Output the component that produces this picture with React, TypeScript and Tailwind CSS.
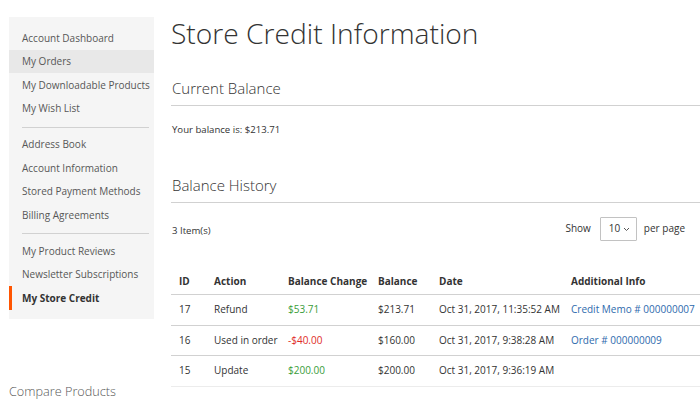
import React from "react";

const font = { fontFamily: '"Open Sans", "Liberation Sans", sans-serif' };

function NavItem({ label, active, current }: { label: string; active?: boolean; current?: boolean }) {
  return (
    <div
      className={
        "h-[23.5px] flex items-center text-[10px] pt-px " +
        (current
          ? "border-l-[3px] border-[#ff5501] pl-[10px] font-bold text-[#333]"
          : "pl-[13px] text-[#575757] " + (active ? "bg-[#e8e8e8]" : ""))
      }
    >
      <span className="whitespace-nowrap">{label}</span>
    </div>
  );
}

function Sep() {
  return (
    <div className="pt-[6.5px] pb-[5px] pl-[13px] pr-[5px]">
      <div className="h-px bg-[#d1d1d1]" />
    </div>
  );
}

const rows = [
  { id: "17", action: "Refund", change: "$53.71", neg: false, balance: "$213.71", date: "Oct 31, 2017, 11:35:52 AM", info: "Credit Memo # 000000007" },
  { id: "16", action: "Used in order", change: "-$40.00", neg: true, balance: "$160.00", date: "Oct 31, 2017, 9:38:28 AM", info: "Order # 000000009" },
  { id: "15", action: "Update", change: "$200.00", neg: false, balance: "$200.00", date: "Oct 31, 2017, 9:36:19 AM", info: "" },
];

export default function App() {
  return (
    <div style={font} className="w-[700px] h-[402px] overflow-hidden bg-white flex text-[#333]">
      {/* Sidebar */}
      <div className="ml-[9px] w-[145px] shrink-0 flex flex-col">
        <div className="mt-[17px] bg-[#f5f5f5] pt-[9px] pb-[9.5px]">
          <NavItem label="Account Dashboard" />
          <NavItem label="My Orders" active />
          <NavItem label="My Downloadable Products" />
          <NavItem label="My Wish List" />
          <Sep />
          <NavItem label="Address Book" />
          <NavItem label="Account Information" />
          <NavItem label="Stored Payment Methods" />
          <NavItem label="Billing Agreements" />
          <Sep />
          <NavItem label="My Product Reviews" />
          <NavItem label="Newsletter Subscriptions" />
          <NavItem label="My Store Credit" current />
        </div>
        <div className="mt-[64px] text-[12.7px] leading-[17px] font-light text-[#575757] whitespace-nowrap">
          Compare Products
        </div>
      </div>

      {/* Main */}
      <div className="ml-[17px] flex-1 min-w-0 flex flex-col">
        <div className="h-[66px] flex items-center">
          <h1 className="text-[28.2px] leading-none font-light text-[#333] whitespace-nowrap">Store Credit Information</h1>
        </div>

        <div className="h-[40px] flex items-end pb-[6px] border-b border-[#d1d1d1]">
          <h2 className="text-[15px] leading-[22px] font-light text-[#333] pl-px">Current Balance</h2>
        </div>
        <div className="mt-[17px] text-[9.6px] leading-[13px] pl-px">Your balance is: $213.71</div>

        <div className="h-[66.5px] flex items-end pb-[6px] border-b border-[#d1d1d1]">
          <h2 className="text-[15px] leading-[22px] font-light text-[#333] pl-px">Balance History</h2>
        </div>

        <div className="h-[52px] flex items-center justify-between pr-[15px]">
          <div className="text-[9.6px] mt-[5px] pl-px">3 Item(s)</div>
          <div className="flex items-center text-[10px] text-[#333]">
            <span>Show</span>
            <div className="ml-[9px] w-[37px] h-[24px] border border-[#c2c2c2] rounded-[1px] flex items-center pl-[8px] gap-[3px]">
              <span className="text-[10px]">10</span>
              <svg width="7" height="5" viewBox="0 0 7 5" className="mt-px">
                <path d="M1 1 L3.5 3.5 L6 1" fill="none" stroke="#555" strokeWidth="1" />
              </svg>
            </div>
            <span className="ml-[7px]">per page</span>
          </div>
        </div>

        <table className="border-collapse text-[10px] mt-[14px] w-[530px] table-fixed">
          <colgroup>
            <col className="w-[35px]" />
            <col className="w-[74px]" />
            <col className="w-[90px]" />
            <col className="w-[61px]" />
            <col className="w-[132px]" />
            <col className="w-[138px]" />
          </colgroup>
          <thead>
            <tr className="h-[26px] border-b border-[#d1d1d1]">
              {["ID", "Action", "Balance Change", "Balance", "Date", "Additional Info"].map((h) => (
                <th key={h} className="text-left font-bold pl-[8px] whitespace-nowrap align-middle">
                  {h}
                </th>
              ))}
            </tr>
          </thead>
          <tbody>
            {rows.map((r, i) => (
              <tr key={r.id} className={"h-[30.5px] border-b " + (i === rows.length - 1 ? "border-[#ececec]" : "border-[#d1d1d1]")}>
                <td className="pl-[8px] whitespace-nowrap text-[#333]">{r.id}</td>
                <td className="pl-[8px] whitespace-nowrap text-[#333]">{r.action}</td>
                <td className={"pl-[8px] whitespace-nowrap " + (r.neg ? "text-[#e02b27]" : "text-[#3a9d3a]")}>{r.change}</td>
                <td className="pl-[8px] whitespace-nowrap text-[#333]">{r.balance}</td>
                <td className="pl-[8px] whitespace-nowrap text-[#333]">{r.date}</td>
                <td className="pl-[8px] whitespace-nowrap text-[#2e6aad]">{r.info}</td>
              </tr>
            ))}
          </tbody>
        </table>
      </div>
    </div>
  );
}
